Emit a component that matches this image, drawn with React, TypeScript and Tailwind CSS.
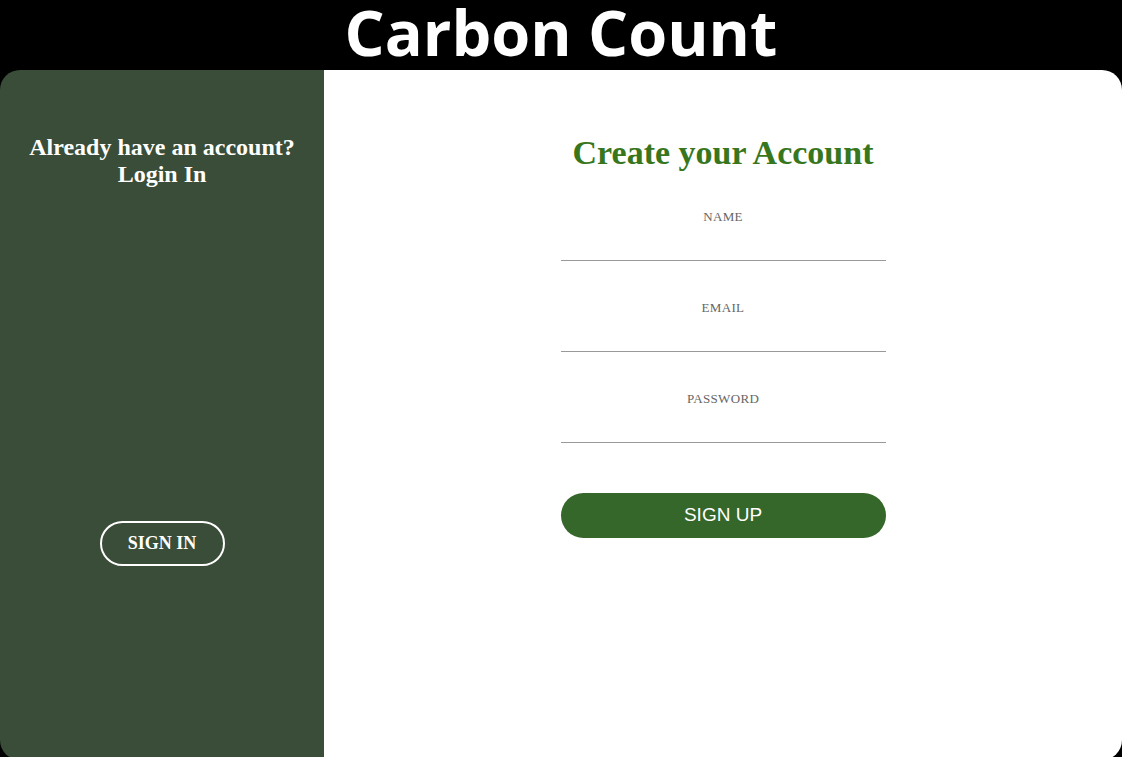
import React from 'react';

const serif = { fontFamily: '"Liberation Serif", "DejaVu Serif", serif' };

const fields = ['NAME', 'EMAIL', 'PASSWORD'];

const App = () => {
  return (
    <div className="w-[1122px] h-[757px] overflow-hidden bg-black">
      <div className="h-[70px] flex items-start justify-center">
        <h1 className="text-white font-bold text-[63px] leading-[64px] whitespace-nowrap" style={{ fontFamily: '"Open Sans", sans-serif' }}>
          Carbon Count
        </h1>
      </div>
      <div className="flex h-[690px] rounded-[20px] overflow-hidden">
        <div className="w-[324px] bg-[#394d39] flex flex-col items-center text-white" style={serif}>
          <p className="mt-[64px] text-center font-bold text-[24px] leading-[27px]">
            Already have an account?
            <br />
            Login In
          </p>
          <button className="mt-[333px] w-[125px] h-[45px] border-2 border-white rounded-full text-[18px] font-bold">
            SIGN IN
          </button>
        </div>
        <div className="flex-1 bg-white flex flex-col items-center">
          <h2 className="mt-[57px] text-[34px] leading-[51px] font-bold text-[#38761d]" style={serif}>
            Create your Account
          </h2>
          <form className="w-[325px] flex flex-col mt-[33px]">
            {fields.map((f) => (
              <label key={f} className="flex flex-col items-center h-[91px]">
                <span className="-mt-1 text-[13px] leading-[19px] text-[#666] tracking-wide" style={serif}>{f}</span>
                <input className="w-full mt-[15px] h-[20px] border-b border-[#999] outline-none" />
              </label>
            ))}
            <button
              type="button"
              className="mt-[9px] h-[45px] rounded-full bg-[#35662a] text-white text-[19px]"
              style={{ fontFamily: '"Liberation Sans", Arial, sans-serif' }}
            >
              SIGN UP
            </button>
          </form>
        </div>
      </div>
    </div>
  );
};

export default App;
